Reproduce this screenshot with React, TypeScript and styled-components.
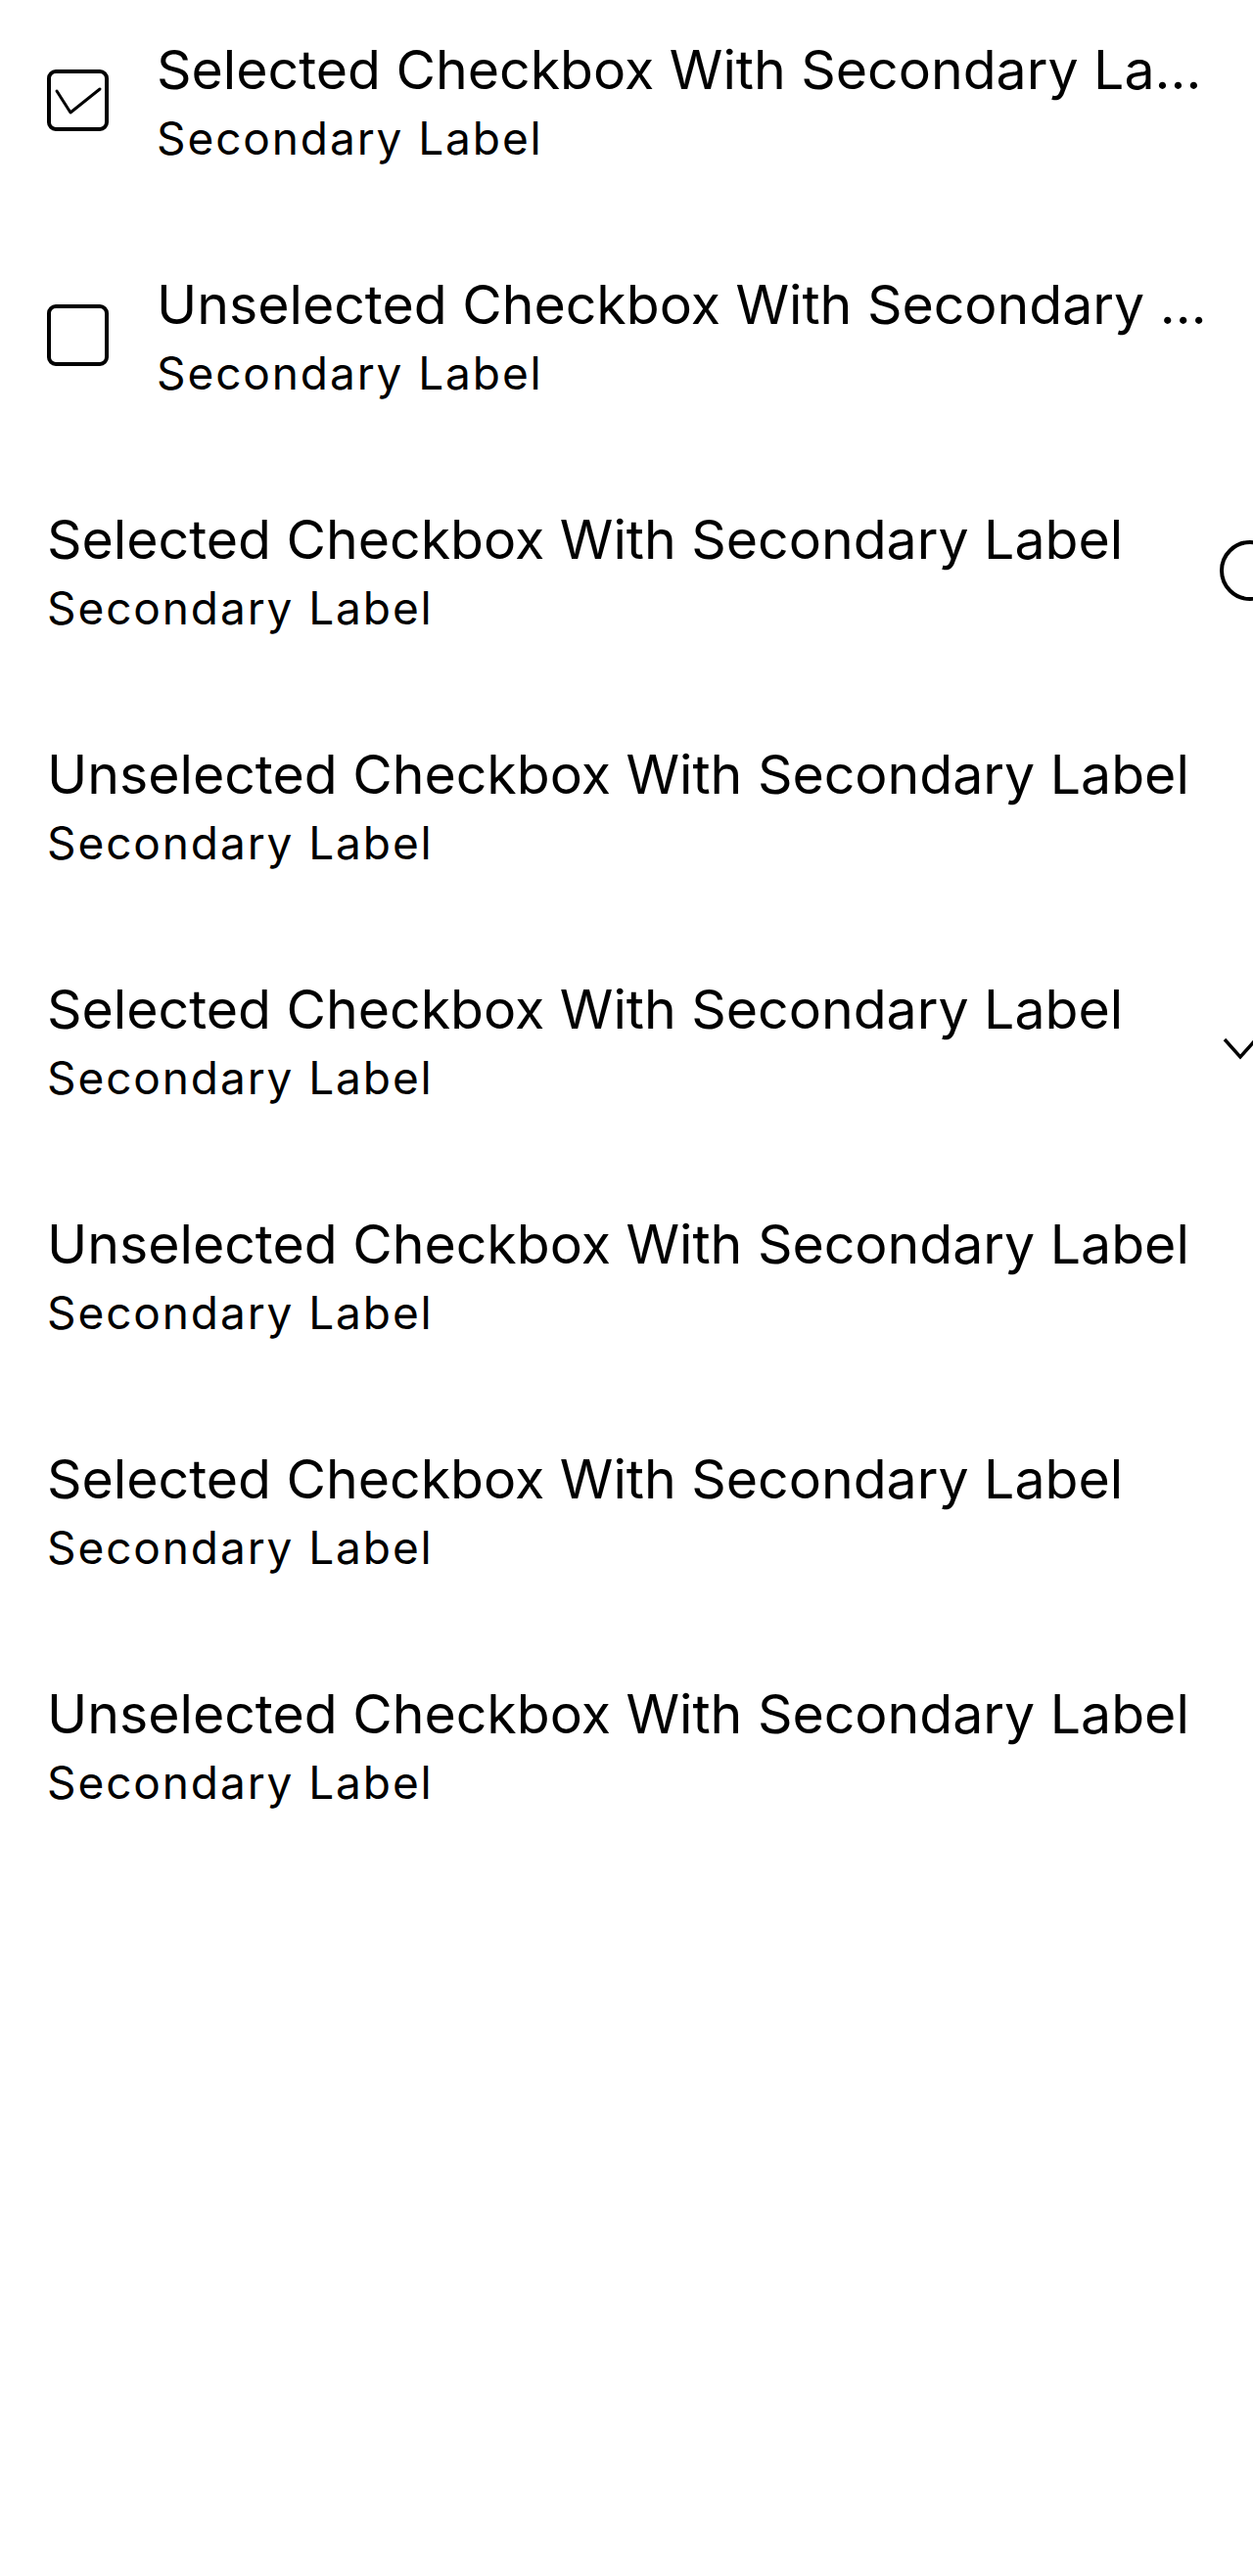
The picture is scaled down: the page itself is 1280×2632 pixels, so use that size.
import React from 'react'
import styled, { createGlobalStyle } from 'styled-components'

type Kind = 'checked' | 'unchecked' | 'radio' | 'chevron' | 'none'

type Item = {
  title: string
  lead?: Kind
  trail?: Kind
}

const items: Item[] = [
  { title: 'Selected Checkbox With Secondary Label', lead: 'checked' },
  { title: 'Unselected Checkbox With Secondary Label', lead: 'unchecked' },
  { title: 'Selected Checkbox With Secondary Label', trail: 'radio' },
  { title: 'Unselected Checkbox With Secondary Label', trail: 'radio' },
  { title: 'Selected Checkbox With Secondary Label', trail: 'chevron' },
  { title: 'Unselected Checkbox With Secondary Label', trail: 'chevron' },
  { title: 'Selected Checkbox With Secondary Label' },
  { title: 'Unselected Checkbox With Secondary Label' },
]

const GlobalStyle = createGlobalStyle`
  html, body {
    margin: 0;
    padding: 0;
    background: #fff;
    overflow-x: hidden;
  }
  body {
    font-family: Inter, "Noto Sans", "Liberation Sans", sans-serif;
    color: #000;
  }
`

const Page = styled.div`
  width: 1280px;
  min-height: 2632px;
  overflow: hidden;
`

const List = styled.div`
  display: flex;
  flex-direction: column;
`

const Row = styled.div<{ $clip?: boolean }>`
  display: flex;
  align-items: center;
  gap: 49px;
  box-sizing: border-box;
  height: 240px;
  padding: 32px 44px 67px 48px;
  width: ${(p) => (p.$clip ? '100%' : 'max-content')};
`

const Labels = styled.div<{ $clip?: boolean }>`
  display: flex;
  flex-direction: column;
  min-width: 0;
  flex: ${(p) => (p.$clip ? '1 1 auto' : '0 0 auto')};
`

const Title = styled.div`
  font-size: 55.4px;
  line-height: 78px;
  white-space: nowrap;
  overflow: hidden;
  text-overflow: ellipsis;
`

const Secondary = styled.div`
  font-size: 46px;
  line-height: 63px;
  letter-spacing: 1.9px;
  white-space: nowrap;
`

const Control = styled.svg<{ $trail?: boolean }>`
  flex-shrink: 0;
  display: block;
  margin-left: ${(p) => (p.$trail ? '50px' : '0')};
`

const Glyph = ({ kind, trail }: { kind: Kind; trail?: boolean }) => {
  if (kind === 'checked' || kind === 'unchecked') {
    return (
      <Control $trail={trail} width={63} height={63} viewBox="0 0 63 63">
        <rect x={2} y={2} width={59} height={59} rx={7} fill="none" stroke="#000" strokeWidth={4} />
        {kind === 'checked' && (
          <polyline
            points="10,22 24,44 54,20"
            fill="none"
            stroke="#000"
            strokeWidth={3}
            strokeLinecap="round"
            strokeLinejoin="round"
          />
        )}
      </Control>
    )
  }
  if (kind === 'radio') {
    return (
      <Control $trail={trail} width={62} height={62} viewBox="0 0 62 62">
        <circle cx={31} cy={31} r={29} fill="none" stroke="#000" strokeWidth={4} />
      </Control>
    )
  }
  if (kind === 'chevron') {
    return (
      <Control $trail={trail} width={42} height={42} viewBox="0 0 42 42">
        <polyline points="5,20 21,38 37,20" fill="none" stroke="#000" strokeWidth={3.4} />
      </Control>
    )
  }
  return null
}

const ListItem = ({ title, lead, trail }: Item) => {
  const clip = !!lead
  return (
    <Row $clip={clip}>
      {lead && <Glyph kind={lead} />}
      <Labels $clip={clip}>
        <Title>{title}</Title>
        <Secondary>Secondary Label</Secondary>
      </Labels>
      {trail && <Glyph kind={trail} trail />}
    </Row>
  )
}

const App = () => (
  <Page>
    <GlobalStyle />
    <List>
      {items.map((item, i) => (
        <ListItem key={i} {...item} />
      ))}
    </List>
  </Page>
)

export default App
